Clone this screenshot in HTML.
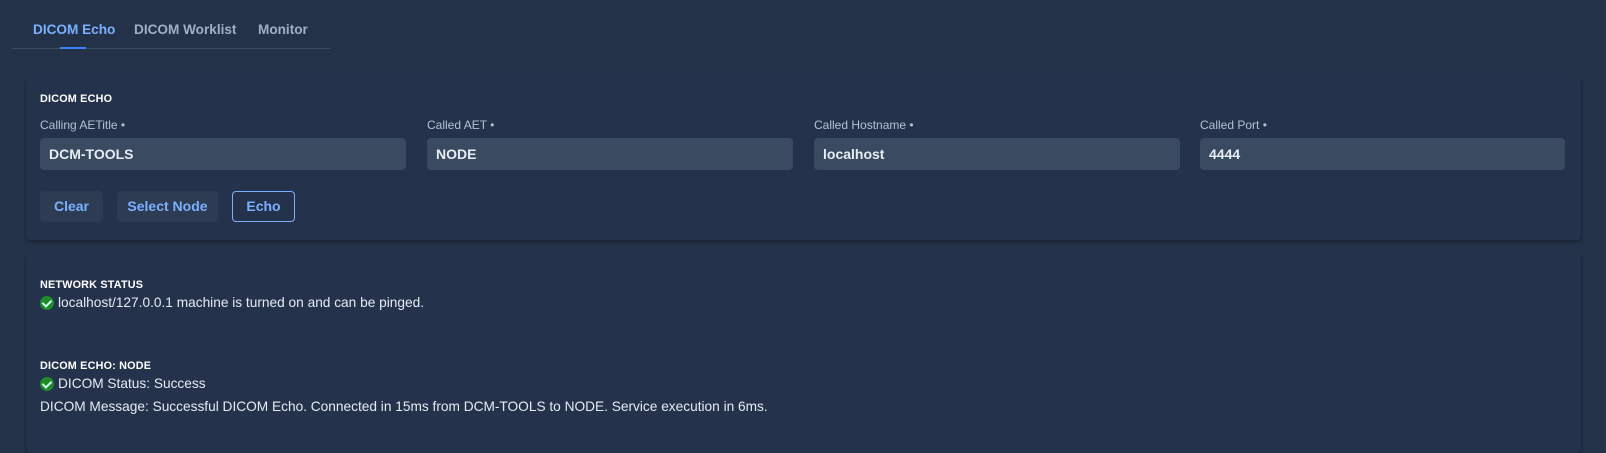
<!DOCTYPE html>
<html><head><style>
body{margin:0;width:1606px;height:441px;background:#243249;font-family:"Liberation Sans",sans-serif;overflow:hidden;position:relative;color:#e6ebf2}
.abs{position:absolute}
.tab{position:absolute;top:22px;font-size:13.6px;font-weight:bold;color:#9fb0c6}
.card{position:absolute;left:26px;width:1555px;background:#24334b;border-radius:4px;box-shadow:0 2px 3px rgba(0,0,0,.35)}
.h{position:absolute;font-size:10.8px;font-weight:bold;color:#fff;letter-spacing:.2px}
.lbl{position:absolute;top:118px;font-size:12px;color:#b5c1d0}
.inp{position:absolute;top:138px;width:366px;height:32px;background:#3a4a60;border-radius:4px;font-size:14px;font-weight:bold;color:#e8edf3;line-height:32px;text-indent:9px}
.btn{position:absolute;top:191px;height:31px;line-height:31px;background:#2d3c53;border-radius:4px;color:#7ab0ff;font-size:14px;font-weight:bold;text-align:center}
.t{position:absolute;font-size:13.7px;color:#e6ebf2}
.ck{display:inline-block;width:14px;height:14px;border-radius:50%;background:#1f8a2a;vertical-align:-3px;margin-right:4px;position:relative}
.ck:after{content:"";position:absolute;left:4px;top:2px;width:4px;height:7px;border:solid #cfe;border-width:0 2px 2px 0;transform:rotate(45deg)}
</style></head><body>
<div class="tab" style="left:33px;color:#7ab0ff">DICOM Echo</div>
<div class="tab" style="left:134px">DICOM Worklist</div>
<div class="tab" style="left:258px">Monitor</div>
<div class="abs" style="left:12px;top:48px;width:319px;height:1px;background:#3a4a60"></div>
<div class="abs" style="left:60px;top:47px;width:26px;height:2px;background:#3b82f6"></div>

<div class="card" style="top:77px;height:163px"></div>
<div class="h" style="left:40px;top:93px">DICOM ECHO</div>
<div class="lbl" style="left:40px">Calling AETitle •</div>
<div class="lbl" style="left:427px">Called AET •</div>
<div class="lbl" style="left:814px">Called Hostname •</div>
<div class="lbl" style="left:1200px">Called Port •</div>
<div class="inp" style="left:40px">DCM-TOOLS</div>
<div class="inp" style="left:427px">NODE</div>
<div class="inp" style="left:814px">localhost</div>
<div class="inp" style="left:1200px;width:365px">4444</div>
<div class="btn" style="left:40px;width:63px">Clear</div>
<div class="btn" style="left:117px;width:101px">Select Node</div>
<div class="btn" style="left:232px;width:61px;background:transparent;border:1px solid #7ab0ff;top:191px;height:29px;line-height:29px">Echo</div>

<div class="card" style="top:253px;height:200px"></div>
<div class="h" style="left:40px;top:279px">NETWORK STATUS</div>
<div class="t" style="left:40px;top:295px"><span class="ck"></span>localhost/127.0.0.1 machine is turned on and can be pinged.</div>
<div class="h" style="left:40px;top:360px">DICOM ECHO: NODE</div>
<div class="t" style="left:40px;top:376px"><span class="ck"></span>DICOM Status: Success</div>
<div class="t" style="left:40px;top:399px">DICOM Message: Successful DICOM Echo. Connected in 15ms from DCM-TOOLS to NODE. Service execution in 6ms.</div>
</body></html>
